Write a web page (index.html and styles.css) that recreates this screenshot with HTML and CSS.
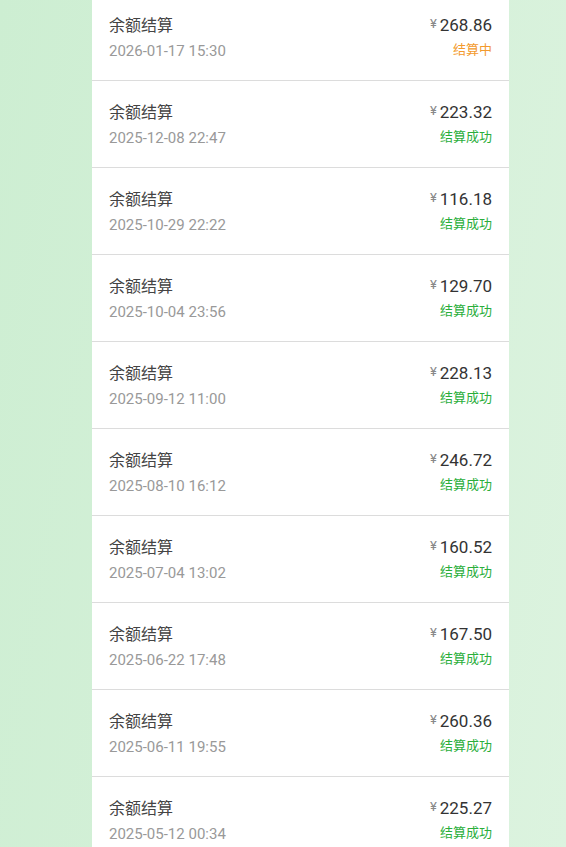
FILE: index.html
```html
<!DOCTYPE html>
<html lang="zh-CN">
<head>
    <meta charset="UTF-8">
    <meta name="viewport" content="width=device-width, initial-scale=1.0">
    <title>结算记录</title>
    <link rel="stylesheet" href="styles.css">
</head>
<body>
    <div class="page">
        <ul class="record-list">
            <li class="record">
                <div class="record-left">
                    <p class="record-title">余额结算</p>
                    <p class="record-time">2026-01-17 15:30</p>
                </div>
                <div class="record-right">
                    <p class="record-amount"><span class="yen">¥</span>268.86</p>
                    <p class="record-status pending">结算中</p>
                </div>
            </li>
            <li class="record">
                <div class="record-left">
                    <p class="record-title">余额结算</p>
                    <p class="record-time">2025-12-08 22:47</p>
                </div>
                <div class="record-right">
                    <p class="record-amount"><span class="yen">¥</span>223.32</p>
                    <p class="record-status done">结算成功</p>
                </div>
            </li>
            <li class="record">
                <div class="record-left">
                    <p class="record-title">余额结算</p>
                    <p class="record-time">2025-10-29 22:22</p>
                </div>
                <div class="record-right">
                    <p class="record-amount"><span class="yen">¥</span>116.18</p>
                    <p class="record-status done">结算成功</p>
                </div>
            </li>
            <li class="record">
                <div class="record-left">
                    <p class="record-title">余额结算</p>
                    <p class="record-time">2025-10-04 23:56</p>
                </div>
                <div class="record-right">
                    <p class="record-amount"><span class="yen">¥</span>129.70</p>
                    <p class="record-status done">结算成功</p>
                </div>
            </li>
            <li class="record">
                <div class="record-left">
                    <p class="record-title">余额结算</p>
                    <p class="record-time">2025-09-12 11:00</p>
                </div>
                <div class="record-right">
                    <p class="record-amount"><span class="yen">¥</span>228.13</p>
                    <p class="record-status done">结算成功</p>
                </div>
            </li>
            <li class="record">
                <div class="record-left">
                    <p class="record-title">余额结算</p>
                    <p class="record-time">2025-08-10 16:12</p>
                </div>
                <div class="record-right">
                    <p class="record-amount"><span class="yen">¥</span>246.72</p>
                    <p class="record-status done">结算成功</p>
                </div>
            </li>
            <li class="record">
                <div class="record-left">
                    <p class="record-title">余额结算</p>
                    <p class="record-time">2025-07-04 13:02</p>
                </div>
                <div class="record-right">
                    <p class="record-amount"><span class="yen">¥</span>160.52</p>
                    <p class="record-status done">结算成功</p>
                </div>
            </li>
            <li class="record">
                <div class="record-left">
                    <p class="record-title">余额结算</p>
                    <p class="record-time">2025-06-22 17:48</p>
                </div>
                <div class="record-right">
                    <p class="record-amount"><span class="yen">¥</span>167.50</p>
                    <p class="record-status done">结算成功</p>
                </div>
            </li>
            <li class="record">
                <div class="record-left">
                    <p class="record-title">余额结算</p>
                    <p class="record-time">2025-06-11 19:55</p>
                </div>
                <div class="record-right">
                    <p class="record-amount"><span class="yen">¥</span>260.36</p>
                    <p class="record-status done">结算成功</p>
                </div>
            </li>
            <li class="record">
                <div class="record-left">
                    <p class="record-title">余额结算</p>
                    <p class="record-time">2025-05-12 00:34</p>
                </div>
                <div class="record-right">
                    <p class="record-amount"><span class="yen">¥</span>225.27</p>
                    <p class="record-status done">结算成功</p>
                </div>
            </li>
        </ul>
    </div>
</body>
</html>
```

FILE: styles.css
```css
html, body {
    margin: 0;
    padding: 0;
    height: 100%;
    overflow: hidden;
}

body {
    font-family: "Noto Sans CJK SC", "Noto Sans", sans-serif;
    background: linear-gradient(100deg, #cdeed2 0%, #d4f0d8 50%, #dcf3df 100%);
    color: #333;
}

.page {
    width: 417px;
    margin-left: 92px;
    background-color: #fff;
    min-height: 100%;
}

.record-list {
    list-style: none;
    margin: -6px 0 0 0;
    padding: 0;
}

.record {
    display: flex;
    justify-content: space-between;
    align-items: flex-start;
    height: 86px;
    padding: 0 17px;
    border-bottom: 1px solid #dcdcdc;
}

.record p {
    margin: 0;
}

.record-title {
    font-size: 16px;
    line-height: 22px;
    margin-top: 19px !important;
    color: #444;
}

.record-time {
    font-family: "Roboto", "Noto Sans", sans-serif;
    font-size: 15px;
    line-height: 20px;
    margin-top: 6px !important;
    color: #999;
}

.record-right {
    text-align: right;
}

.record-amount {
    font-family: "Roboto", sans-serif;
    font-size: 17px;
    line-height: 22px;
    margin-top: 19px !important;
    color: #333;
}

.yen {
    font-size: 13px;
    color: #888;
    vertical-align: 3px;
    margin-right: 3px;
}

.record-status {
    font-size: 13px;
    line-height: 18px;
    margin-top: 4px !important;
}

.pending {
    color: #f39a2d;
}

.done {
    color: #2aae3b;
}
```
